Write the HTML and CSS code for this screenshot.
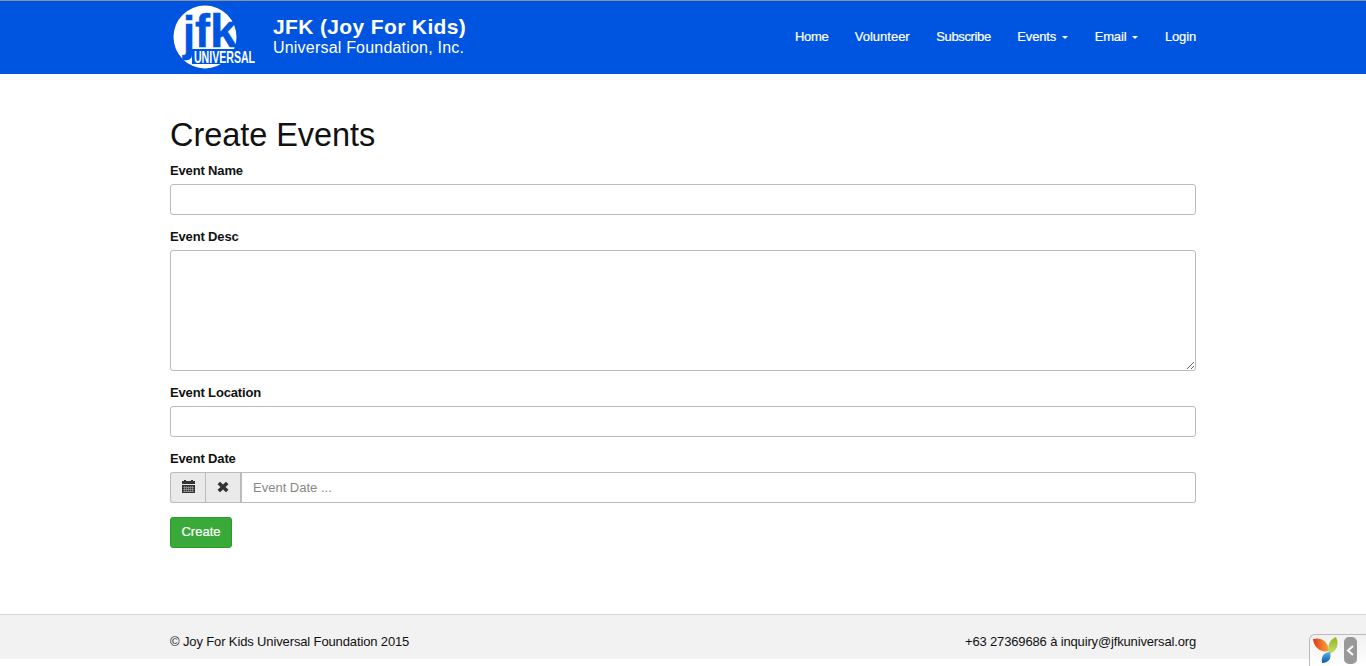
FILE: index.html
```html
<!DOCTYPE html>
<html lang="en">
<head>
<meta charset="utf-8">
<title>Create Events</title>
<link rel="stylesheet" href="styles.css">
</head>
<body>
<header class="navbar">
  <div class="container navbar-inner">
    <a class="brand">
      <svg class="logo" width="90" height="73" viewBox="170 1 90 73">
        <circle cx="205" cy="37" r="31.5" fill="#fff"/>
        <g class="logo-letters" fill="#0055e0" stroke="#0055e0">
          <text x="183" y="50" font-size="49" textLength="12" lengthAdjust="spacingAndGlyphs">j</text>
          <text x="195" y="46.500" font-size="46" textLength="15" lengthAdjust="spacingAndGlyphs">f</text>
          <text x="210" y="46.500" font-size="47" textLength="27" lengthAdjust="spacingAndGlyphs">k</text>
        </g>
        <path d="M192 49h50v15h-50z" fill="#0055e0"/>
        <text class="logo-word" x="194" y="62.500" font-size="17" fill="#fff" textLength="61" lengthAdjust="spacingAndGlyphs">UNIVERSAL</text>
      </svg>
      <span class="brand-text"><strong>JFK (Joy For Kids)</strong><span>Universal Foundation, Inc.</span></span>
    </a>
    <nav class="nav">
      <a class="home">Home</a><a class="volunteer">Volunteer</a><a class="subscribe">Subscribe</a><a class="events">Events<i class="caret"></i></a><a class="email">Email<i class="caret"></i></a><a class="login">Login</a>
    </nav>
  </div>
</header>
<main class="container content">
  <h1>Create Events</h1>
  <form>
    <div class="field"><label for="name">Event Name</label><input id="name" class="control" type="text"></div>
    <div class="field"><label for="desc">Event Desc</label><textarea id="desc" class="control area"></textarea></div>
    <div class="field"><label for="location">Event Location</label><input id="location" class="control" type="text"></div>
    <div class="field"><label for="date">Event Date</label>
      <div class="group">
        <span class="addon"><svg width="13" height="13" viewBox="0 0 13 13"><path d="M0 1h2V0h2v1h5V0h2v1h2v3H0zM0 5h13v8H0z" fill="#333"/><path d="M1 7.500h11M1 9.500h11M1 11.500h11M2.500 6v6M4.500 6v6M6.500 6v6M8.500 6v6M10.500 6v6" stroke="#aaa" stroke-width=".6"/></svg></span>
        <span class="addon"><svg width="12" height="12" viewBox="0 0 12 12"><path d="M3 .8 6 3.500 9 .8l2.500 2.400L8.500 6l3 2.800L9 11.200 6 8.500l-3 2.700L.5 8.800l3-2.800-3-2.800z" fill="#333"/></svg></span>
        <input id="date" class="control" type="text" placeholder="Event Date ...">
      </div>
    </div>
    <button class="btn" type="button">Create</button>
  </form>
</main>
<footer class="footer">
  <div class="container footer-inner"><span class="copyright">© Joy For Kids Universal Foundation 2015</span><span class="contact">+63 27369686 à inquiry@jfkuniversal.org</span></div>
</footer>
<div class="debug">
  <svg width="56" height="31" viewBox="1310 635 56 31">
    <defs>
      <linearGradient id="orange"><stop offset="0" stop-color="#df3a16"/><stop offset="1" stop-color="#f9a63b"/></linearGradient>
      <linearGradient id="green" x2="0" y2="1"><stop offset="0" stop-color="#8db61c"/><stop offset="1" stop-color="#cddf72"/></linearGradient>
      <linearGradient id="blue" x2="0" y2="1"><stop offset="0" stop-color="#5cb5e8"/><stop offset="1" stop-color="#0757a8"/></linearGradient>
    </defs>
    <path d="M1313 639c7-2 15 1 16 12-8 2-15-3-16-12z" fill="url(#orange)"/>
    <path d="M1336 637c4 8 0 15-7 17-2-8 0-14 7-17z" fill="url(#green)"/>
    <path d="M1330 652c2 7-2 11-8 11-1-7 2-11 8-11z" fill="url(#blue)"/>
    <rect x="1344" y="637" width="13" height="27" rx="5" fill="#999"/>
    <path d="m1353 646-5 4.500 5 4.500" fill="none" stroke="#fff" stroke-width="2"/>
  </svg>
</div>
</body>
</html>
```
FILE: styles.css
```css
* { box-sizing: border-box; }
body { margin: 0; height: 666px; overflow: hidden; background: #fff; color: #111; font: 13px/18px "Liberation Sans", Arial, sans-serif; }
.container { width: 1026px; margin: 0 auto; }
.navbar { height: 74px; background: #0055e0; border-top: 1px solid #8c929c; }
.navbar-inner { display: flex; justify-content: space-between; }
.brand { display: flex; color: #fff; }
.logo { display: block; overflow: visible; }
.logo-letters { font-family: "Liberation Sans", Arial, sans-serif; font-weight: bold; stroke-width: .5; }
.logo-word { font-family: "Liberation Sans", Arial, sans-serif; font-weight: bold; }
.brand-text { display: flex; flex-direction: column; padding: 14px 0 0 13px; font-size: 16px; line-height: 20px; letter-spacing: .2px; }
.brand-text strong { font-size: 21px; line-height: 23px; letter-spacing: .36px; }
.nav { display: flex; justify-content: space-between; width: 401px; padding-top: 27px; }
.nav a { display: flex; align-items: center; height: 18px; color: #fff; white-space: nowrap; -webkit-text-stroke: .2px #fff; }
.home, .subscribe { letter-spacing: -.35px; }
.events, .email, .login { letter-spacing: -.15px; }
.caret { margin: 1px 0 0 6px; border: 3px solid transparent; border-top-color: #fff; border-bottom: 0; }
.content { height: 540px; padding-top: 43px; }
h1 { margin: 0 0 9px; font-size: 32.5px; line-height: 36px; font-weight: normal; letter-spacing: -.05px; }
.field { margin-bottom: 13px; }
label { display: block; margin-bottom: 4px; font-weight: bold; line-height: 18px; letter-spacing: -.15px; }
.control { display: block; width: 100%; height: 31px; padding: 5px 11px; border: 1px solid #bbb; border-radius: 3px; background: #fff; font: 13px/19px "Liberation Sans", Arial, sans-serif; }
.control::placeholder { color: #888; opacity: 1; }
.area { height: 121px; resize: vertical; }
.group { display: flex; }
.addon { display: flex; align-items: center; justify-content: center; width: 35px; height: 31px; flex: none; padding-bottom: 2px; background: #eaeaea; border: 1px solid #bbb; border-right: 0; }
.addon:first-child { border-radius: 3px 0 0 3px; }
.group .control { flex: 1; border-left-width: 2px; border-radius: 0 3px 3px 0; }
.btn { display: block; width: 62px; height: 31px; margin-top: 14px; padding: 0 0 2px; border: 1px solid #2c9b2c; border-radius: 3px; background: #39a939; color: #fff; font: 13px "Liberation Sans", Arial, sans-serif; -webkit-text-stroke: .2px #fff; }
.footer { height: 45px; background: #f2f2f2; border-top: 1px solid #d5d5d5; }
.footer-inner { display: flex; justify-content: space-between; padding-top: 18px; }
.copyright { letter-spacing: -.13px; }
.contact { letter-spacing: -.15px; }
.debug { position: fixed; right: 0; bottom: 0; width: 57px; height: 32px; border: 1px solid #bbb; border-width: 1px 0 0 1px; border-radius: 6px 0 0; background: linear-gradient(#f1f1f1, #fff); }
.debug svg { display: block; }
```
